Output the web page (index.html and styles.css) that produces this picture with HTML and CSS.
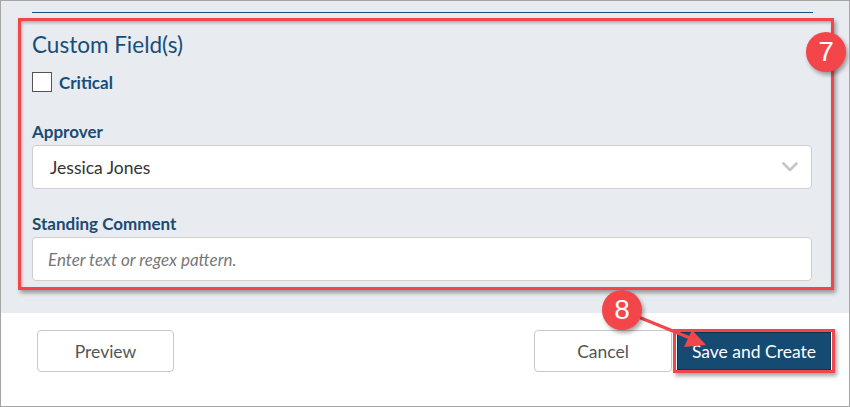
FILE: index.html
```html
<!DOCTYPE html>
<html>
<head>
<meta charset="utf-8">
<link rel="stylesheet" href="styles.css">
</head>
<body>
<div class="frame">
  <div class="top">
    <div class="rule"></div>
    <div class="callout">
      <h2 class="title">Custom Field(s)</h2>
      <label class="check-row"><span class="checkbox"></span><span class="check-label">Critical</span></label>
      <div class="field-label label-approver">Approver</div>
      <div class="select">
        <span class="select-value">Jessica Jones</span>
        <svg class="chevron" width="16" height="10" viewBox="0 0 16 10"><path d="M1.5 1.5 L8 8 L14.5 1.5" fill="none" stroke="#c6c6c6" stroke-width="2.6" stroke-linecap="round" stroke-linejoin="round"/></svg>
      </div>
      <div class="field-label label-comment">Standing Comment</div>
      <div class="input"><span class="placeholder">Enter text or regex pattern.</span></div>
    </div>
  </div>
  <div class="footer">
    <button class="btn">Preview</button>
    <div class="spacer"></div>
    <button class="btn btn-cancel">Cancel</button>
    <div class="save-callout"><button class="btn-primary">Save and Create</button></div>
  </div>
  <div class="badge badge-7">7</div>
  <svg class="arrow" width="80" height="50" viewBox="0 0 80 50">
    <line x1="2" y1="2" x2="56" y2="24" stroke="#f2464a" stroke-width="3.2"/>
    <polygon points="72,31 50,33 58,16" fill="#f2464a"/>
  </svg>
  <div class="badge badge-8">8</div>
</div>
</body>
</html>
```

FILE: styles.css
```css
* { box-sizing: border-box; }
html, body { margin: 0; padding: 0; background: #fff; }
.frame {
  position: relative;
  width: 850px;
  height: 407px;
  border: 1px solid #a5a5a5;
  overflow: hidden;
  font-family: Lato, "Open Sans", sans-serif;
  background: #fff;
}
.top {
  background: #e8ebf0;
  height: 312px;
  padding-top: 11px;
}
.rule {
  height: 1px;
  background: #1f4e79;
  margin: 0 36px 0 31px;
}
.callout {
  margin: 5px 15px 0 17px;
  border: 3px solid #f2464a;
  padding: 10px 19px 6px 11px;
  box-shadow: 2px 3px 4px rgba(0,0,0,0.35), inset 1px 2px 3px rgba(0,0,0,0.25);
}
.title {
  margin: 0;
  font-size: 22.5px;
  line-height: 28px;
  font-weight: 400;
  color: #164d7a;
}
.check-row {
  display: flex;
  align-items: center;
  margin-top: 13px;
  height: 20px;
  gap: 7px;
}
.checkbox {
  width: 20px;
  height: 20px;
  border: 1px solid #555;
  background: #fff;
}
.check-label {
  font-size: 17px;
  font-weight: 700;
  color: #164d7a;
}
.field-label {
  font-size: 17px;
  line-height: 20px;
  font-weight: 700;
  color: #1b4a72;
}
.label-approver { margin-top: 30px; }
.label-comment { margin-top: 25px; }
.select, .input {
  margin-top: 3px;
  height: 44px;
  background: #fff;
  border: 1px solid #cfcfcf;
  border-radius: 4px;
  display: flex;
  align-items: center;
}
.select { padding: 0 13px 0 17px; justify-content: space-between; }
.select-value { font-size: 17.5px; color: #333; }
.chevron { display: block; }
.input { padding: 0 15px; }
.placeholder { font-size: 17px; font-style: italic; color: #777; }
.footer {
  display: flex;
  align-items: flex-start;
  padding: 17px 14px 0 36px;
}
.spacer { flex: 1; }
.btn {
  width: 137px;
  height: 42px;
  border: 1px solid #c8c8c8;
  border-radius: 4px;
  background: #fff;
  font-family: Lato, "Open Sans", sans-serif;
  font-size: 17.5px;
  color: #555;
  padding: 0;
}
.btn-cancel { width: 138px; margin-right: 1px; }
.save-callout {
  margin-top: -1px;
  border: 3px solid #f2464a;
  box-shadow: 2px 3px 4px rgba(0,0,0,0.35);
  padding: 0 1px 0 1px;
}
.btn-primary {
  display: block;
  width: 154px;
  height: 38px;
  background: #154a73;
  border: 1px solid #0c3656;
  color: #fff;
  font-family: Lato, "Open Sans", sans-serif;
  font-size: 17.5px;
  padding: 0;
  margin: 0;
}
.badge {
  position: absolute;
  width: 40px;
  height: 40px;
  border-radius: 50%;
  background: #f2464a;
  color: #fff;
  font-family: "Liberation Sans", Arial, sans-serif;
  font-size: 28px;
  line-height: 40px;
  text-align: center;
  box-shadow: 2px 3px 4px rgba(0,0,0,0.35);
}
.badge-7 { left: 805px; top: 31px; }
.badge-8 { left: 601px; top: 289px; }
.arrow { position: absolute; left: 633px; top: 313px; }
```
